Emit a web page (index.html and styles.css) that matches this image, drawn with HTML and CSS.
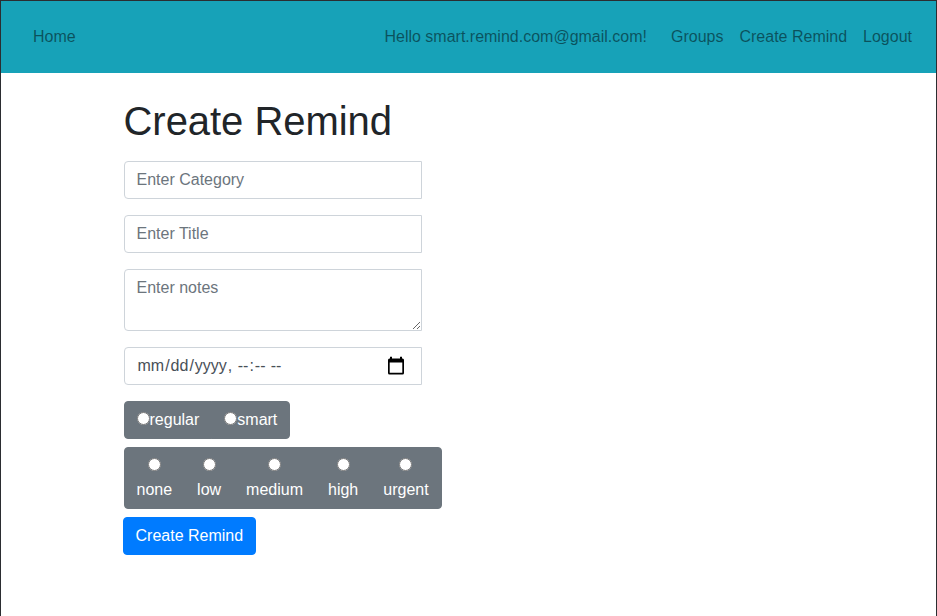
FILE: index.html
```html
<!DOCTYPE html>
<html lang="en">
<head>
<meta charset="utf-8">
<title>Create Remind</title>
<link rel="stylesheet" href="styles.css">
</head>
<body>
<nav class="navbar">
  <a class="nav-link" href="#">Home</a>
  <div class="nav-right">
    <span class="greeting">Hello smart.remind.com@gmail.com!</span>
    <a class="nav-link" href="#">Groups</a>
    <a class="nav-link" href="#">Create Remind</a>
    <a class="nav-link" href="#">Logout</a>
  </div>
</nav>
<main class="container">
  <h1>Create Remind</h1>
  <form>
    <input class="form-control" type="text" placeholder="Enter Category">
    <input class="form-control" type="text" placeholder="Enter Title">
    <textarea class="form-control notes" placeholder="Enter notes" rows="2"></textarea>
    <div class="date-field">
      <input class="form-control" type="datetime-local">
      <svg class="calendar" viewBox="0 0 18 20" width="18" height="20" aria-hidden="true">
        <path fill="#000" fill-rule="evenodd" d="M3 0.700h2v1.800h8V0.700h2v1.800h.5A1.500 1.500 0 0 1 17 4V17A1.500 1.500 0 0 1 15.500 18.500H2.500A1.500 1.500 0 0 1 1 17V4A1.500 1.500 0 0 1 2.500 2.500H3zM2.700 6.500v10.300h12.600V6.500z"/>
      </svg>
    </div>
    <div class="btn-group">
      <label class="btn"><input type="radio" name="kind">regular</label>
      <label class="btn"><input type="radio" name="kind">smart</label>
    </div>
    <div class="btn-group">
      <label class="btn"><input type="radio" name="priority"><br>none</label>
      <label class="btn"><input type="radio" name="priority"><br>low</label>
      <label class="btn"><input type="radio" name="priority"><br>medium</label>
      <label class="btn"><input type="radio" name="priority"><br>high</label>
      <label class="btn"><input type="radio" name="priority"><br>urgent</label>
    </div>
    <button class="btn btn-primary" type="button">Create Remind</button>
  </form>
</main>
</body>
</html>
```
FILE: styles.css
```css
* {
  box-sizing: border-box;
}

body {
  margin: 0;
  min-height: 616px;
  border: 1px solid #2b2d31;
  border-bottom: 0;
  background: #fff;
  color: #212529;
  font: 16px/1.5 "Liberation Sans", Arial, sans-serif;
}

.navbar {
  display: flex;
  align-items: center;
  justify-content: space-between;
  height: 72px;
  padding: 0 16px 0 24px;
  background: #17a2b8;
}

.nav-link,
.greeting {
  color: rgba(0, 0, 0, 0.5);
  text-decoration: none;
}

.nav-link {
  padding: 8px;
}

.nav-right {
  display: flex;
  align-items: center;
}

.greeting {
  margin-right: 16px;
}

.container {
  padding: 24px 0 0 122.5px;
}

h1 {
  margin: 0 0 16px;
  font-size: 40px;
  font-weight: 400;
  line-height: 48px;
  letter-spacing: -0.04px;
}

form {
  display: flex;
  flex-direction: column;
  align-items: flex-start;
}

.form-control {
  display: block;
  width: 298px;
  height: 38px;
  margin: 0 0 16px;
  padding: 6px 12px;
  border: 1px solid #ced4da;
  border-radius: 4px 0 0 4px;
  background: #fff;
  color: #495057;
  font: inherit;
}

.form-control::placeholder {
  color: #6c757d;
  opacity: 1;
}

.notes {
  height: 62px;
  overflow: auto;
  resize: vertical;
}

.date-field {
  position: relative;
}

.date-field .form-control::-webkit-calendar-picker-indicator {
  opacity: 0;
}

.calendar {
  position: absolute;
  top: 9px;
  right: 17px;
  pointer-events: none;
}

.btn-group {
  display: inline-flex;
  margin-bottom: 8px;
}

.btn {
  padding: 6px 12px;
  border: 1px solid #6c757d;
  border-radius: 4px;
  background: #6c757d;
  color: #fff;
  font: inherit;
  text-align: center;
}

.btn-group .btn:not(:first-child) {
  margin-left: -1px;
  border-top-left-radius: 0;
  border-bottom-left-radius: 0;
}

.btn-group .btn:not(:last-child) {
  border-top-right-radius: 0;
  border-bottom-right-radius: 0;
}

input[type="radio"] {
  width: 13px;
  height: 13px;
  margin: 0;
}

.btn-primary {
  margin-left: -1px;
  border-color: #007bff;
  background: #007bff;
}
```
